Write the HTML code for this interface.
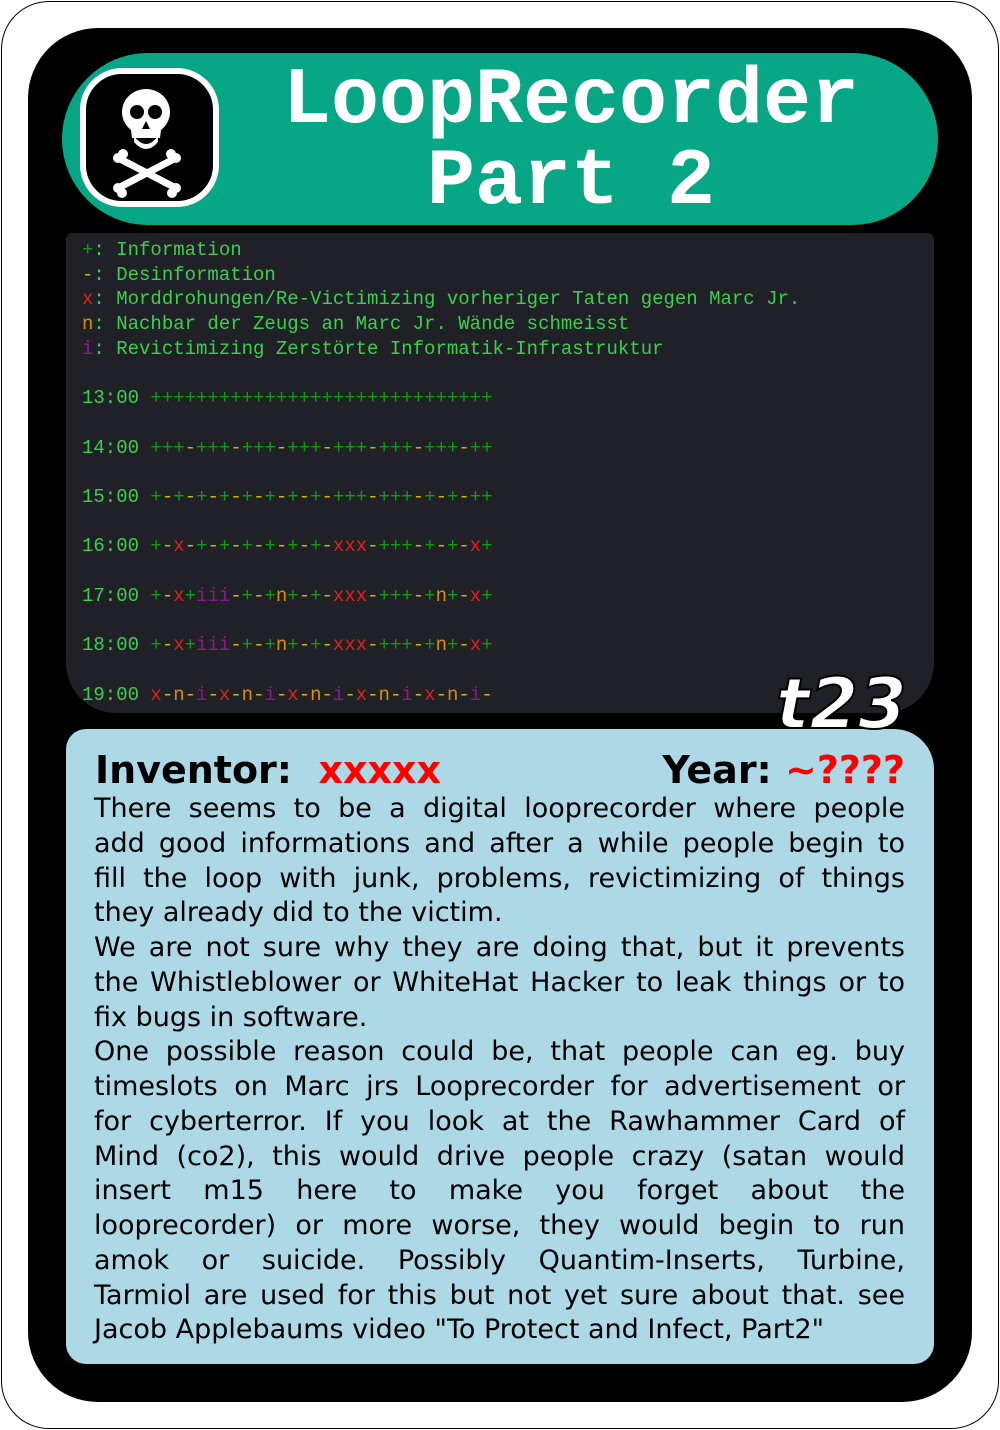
<!DOCTYPE html>
<html><head><meta charset="utf-8"><style>
*{margin:0;padding:0;box-sizing:border-box}
body{width:1000px;height:1430px;background:#fff;position:relative;overflow:hidden}
.outer{position:absolute;left:1px;top:1px;width:998px;height:1428px;border:1.5px solid #000;border-radius:48px;background:#fff}
.black{position:absolute;left:28px;top:28px;width:944px;height:1374px;background:#000;border-radius:70px}
.blue{position:absolute;left:66px;top:729px;width:868px;height:635px;background:#add8e6;border-radius:20px 40px 20px 20px}
.term{position:absolute;left:66px;top:233px;width:868px;height:480px;background:#202126;border-radius:6px 6px 50px 50px}
.hdr{position:absolute;left:62px;top:53px;width:876px;height:172px;background:#07a685;border-radius:86px}
.icon{position:absolute;left:80px;top:68px;width:139px;height:139px;background:#000;border:6px solid #fff;border-radius:42px}
.title{position:absolute;left:226px;width:690px;text-align:center;color:#fff;font:bold 80px "Liberation Mono",monospace;line-height:80px}
.mono{position:absolute;left:82px;font:19px "Liberation Mono",monospace;color:#3ccf4e;white-space:pre;line-height:24.7px}
.g{color:#139a13}.y{color:#c9b800}.r{color:#e3201b}.o{color:#d68f0c}.p{color:#8a1a8a}
.t23{position:absolute;left:776px;top:664px;font:italic bold 70px "DejaVu Sans",sans-serif;color:#fff;-webkit-text-stroke:2px #000;line-height:80px}
.head{position:absolute;left:95px;top:747px;width:810px;font:bold 38px "DejaVu Sans",sans-serif;line-height:46px;color:#000}
.red{color:#f00}
.body{position:absolute;left:94px;top:792px;width:811px;font:27px "DejaVu Sans",sans-serif;line-height:34.75px;color:#000}
.j{text-align:justify;text-align-last:justify;white-space:nowrap}
.l{white-space:nowrap}
</style></head><body>
<div class="outer"></div>
<div class="black"></div>
<div class="blue"></div>
<div class="term"></div>
<div class="hdr"></div>
<div class="icon"><svg width="127" height="127" viewBox="0 0 127 127">
<g fill="#fff">
<ellipse cx="60" cy="38" rx="24" ry="23"/>
<path d="M44 48 L76 48 L74 64 L46 64Z"/>
<path d="M48 62 Q60 78 72 62 L72 68 Q60 82 48 68Z"/>
<g stroke="#fff" stroke-width="7" stroke-linecap="round"><line x1="36" y1="86" x2="86" y2="112"/><line x1="86" y1="86" x2="36" y2="112"/></g>
<circle cx="32" cy="84" r="5"/><circle cx="37" cy="80" r="5"/><circle cx="90" cy="84" r="5"/><circle cx="85" cy="80" r="5"/>
<circle cx="32" cy="114" r="5"/><circle cx="36" cy="119" r="5"/><circle cx="90" cy="114" r="5"/><circle cx="86" cy="119" r="5"/>
</g>
<g fill="#000"><circle cx="51" cy="38" r="7"/><circle cx="69" cy="38" r="7"/><path d="M60 47 L56 55 L64 55Z"/></g>
</svg></div>
<div class="title" style="top:62px">LoopRecorder</div>
<div class="title" style="top:143px">Part 2</div>
<div class="mono" style="top:238px"><span class="g">+</span>: Information
<span class="y">-</span>: Desinformation
<span class="r">x</span>: Morddrohungen/Re-Victimizing vorheriger Taten gegen Marc Jr.
<span class="o">n</span>: Nachbar der Zeugs an Marc Jr. Wände schmeisst
<span class="p">i</span>: Revictimizing Zerstörte Informatik-Infrastruktur

13:00 <span class="g">++++++++++++++++++++++++++++++</span>

14:00 <span class="g">+++</span><span class="y">-</span><span class="g">+++</span><span class="y">-</span><span class="g">+++</span><span class="y">-</span><span class="g">+++</span><span class="y">-</span><span class="g">+++</span><span class="y">-</span><span class="g">+++</span><span class="y">-</span><span class="g">+++</span><span class="y">-</span><span class="g">++</span>

15:00 <span class="g">+</span><span class="y">-</span><span class="g">+</span><span class="y">-</span><span class="g">+</span><span class="y">-</span><span class="g">+</span><span class="y">-</span><span class="g">+</span><span class="y">-</span><span class="g">+</span><span class="y">-</span><span class="g">+</span><span class="y">-</span><span class="g">+</span><span class="y">-</span><span class="g">+++</span><span class="y">-</span><span class="g">+++</span><span class="y">-</span><span class="g">+</span><span class="y">-</span><span class="g">+</span><span class="y">-</span><span class="g">++</span>

16:00 <span class="g">+</span><span class="y">-</span><span class="r">x</span><span class="y">-</span><span class="g">+</span><span class="y">-</span><span class="g">+</span><span class="y">-</span><span class="g">+</span><span class="y">-</span><span class="g">+</span><span class="y">-</span><span class="g">+</span><span class="y">-</span><span class="g">+</span><span class="y">-</span><span class="r">xxx</span><span class="y">-</span><span class="g">+++</span><span class="y">-</span><span class="g">+</span><span class="y">-</span><span class="g">+</span><span class="y">-</span><span class="r">x</span><span class="g">+</span>

17:00 <span class="g">+</span><span class="y">-</span><span class="r">x</span><span class="g">+</span><span class="p">iii</span><span class="y">-</span><span class="g">+</span><span class="y">-</span><span class="g">+</span><span class="o">n</span><span class="g">+</span><span class="y">-</span><span class="g">+</span><span class="y">-</span><span class="r">xxx</span><span class="y">-</span><span class="g">+++</span><span class="y">-</span><span class="g">+</span><span class="o">n</span><span class="g">+</span><span class="y">-</span><span class="r">x</span><span class="g">+</span>

18:00 <span class="g">+</span><span class="y">-</span><span class="r">x</span><span class="g">+</span><span class="p">iii</span><span class="y">-</span><span class="g">+</span><span class="y">-</span><span class="g">+</span><span class="o">n</span><span class="g">+</span><span class="y">-</span><span class="g">+</span><span class="y">-</span><span class="r">xxx</span><span class="y">-</span><span class="g">+++</span><span class="y">-</span><span class="g">+</span><span class="o">n</span><span class="g">+</span><span class="y">-</span><span class="r">x</span><span class="g">+</span>

19:00 <span class="r">x</span><span class="y">-</span><span class="o">n</span><span class="y">-</span><span class="p">i</span><span class="y">-</span><span class="r">x</span><span class="y">-</span><span class="o">n</span><span class="y">-</span><span class="p">i</span><span class="y">-</span><span class="r">x</span><span class="y">-</span><span class="o">n</span><span class="y">-</span><span class="p">i</span><span class="y">-</span><span class="r">x</span><span class="y">-</span><span class="o">n</span><span class="y">-</span><span class="p">i</span><span class="y">-</span><span class="r">x</span><span class="y">-</span><span class="o">n</span><span class="y">-</span><span class="p">i</span><span class="y">-</span></div>
<div class="t23">t23</div>
<div class="head"><span>Inventor:&nbsp; <span class="red">xxxxx</span></span><span style="float:right">Year:&nbsp;<span class="red">~????</span></span></div>
<div class="body">
<div class="j">There seems to be a digital looprecorder where people</div>
<div class="j">add good informations and after a while people begin to</div>
<div class="j">fill the loop with junk, problems, revictimizing of things</div>
<div class="l">they already did to the victim.</div>
<div class="j">We are not sure why they are doing that, but it prevents</div>
<div class="j">the Whistleblower or WhiteHat Hacker to leak things or to</div>
<div class="l">fix bugs in software.</div>
<div class="j">One possible reason could be, that people can eg. buy</div>
<div class="j">timeslots on Marc jrs Looprecorder for advertisement or</div>
<div class="j">for cyberterror. If you look at the Rawhammer Card of</div>
<div class="j">Mind (co2), this would drive people crazy (satan would</div>
<div class="j">insert m15 here to make you forget about the</div>
<div class="j">looprecorder) or more worse, they would begin to run</div>
<div class="j">amok or suicide. Possibly Quantim-Inserts, Turbine,</div>
<div class="j">Tarmiol are used for this but not yet sure about that. see</div>
<div class="l">Jacob Applebaums video "To Protect and Infect, Part2"</div>
</div>
</body></html>
